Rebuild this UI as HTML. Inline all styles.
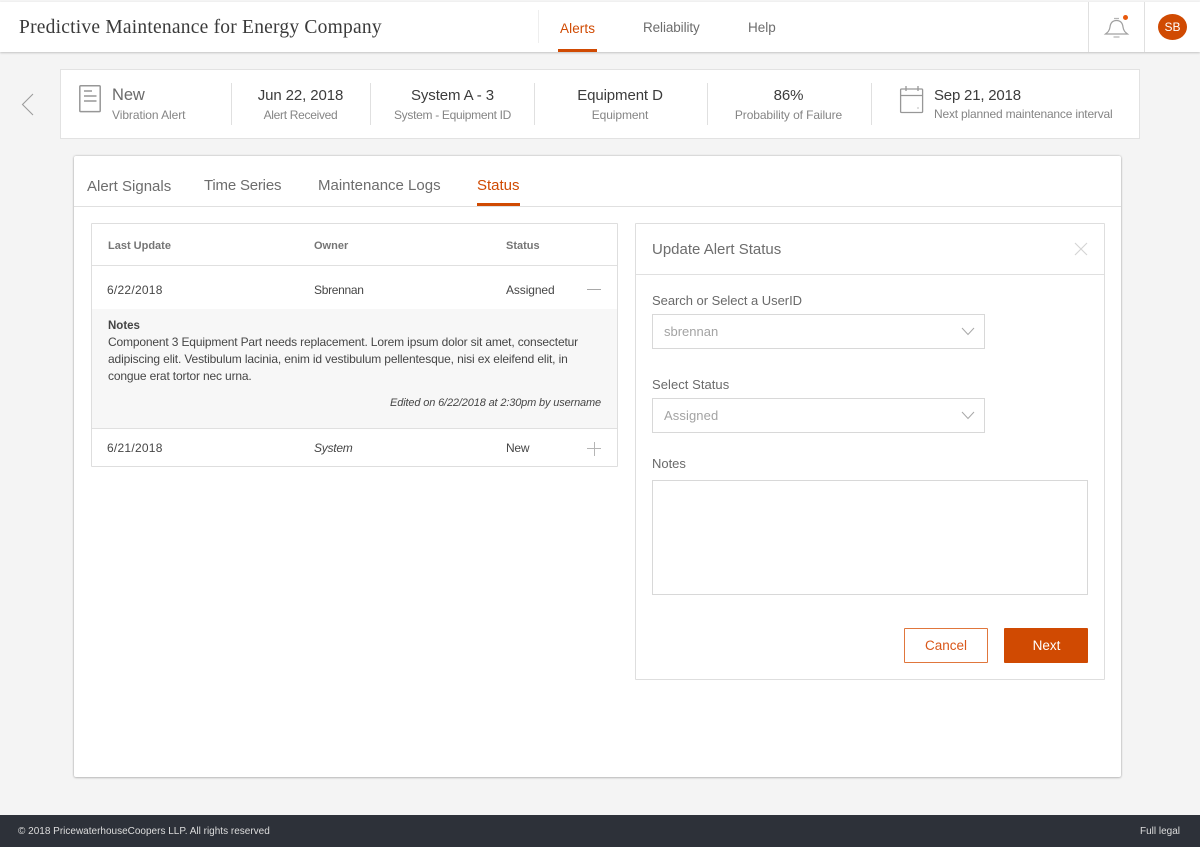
<!DOCTYPE html>
<html lang="en">
<head>
<meta charset="utf-8">
<title>Predictive Maintenance for Energy Company</title>
<style>
html,body{margin:0;padding:0;}
body{width:1200px;height:847px;position:relative;overflow:hidden;background:#f4f4f4;font-family:"Liberation Sans",Arial,sans-serif;color:#464646;}
.a{position:absolute;box-sizing:border-box;}
.t{position:absolute;white-space:nowrap;line-height:20px;height:20px;}
.c{transform:translateX(-50%);}
.r{transform:translateX(-100%);}
.line{position:absolute;background:#e0e0e0;}
svg{position:absolute;overflow:visible;}
</style>
</head>
<body>
<!-- header -->
<div class="a" style="left:0;top:2px;width:1200px;height:50px;background:#fff;box-shadow:0 1px 2px rgba(0,0,0,.2);"></div>
<div class="t" style="left:19px;top:18px;font-family:'Liberation Serif',serif;font-size:19.5px;color:#3a3a3a;letter-spacing:.22px;">Predictive Maintenance for Energy Company</div>
<div class="line" style="left:538px;top:10px;width:1px;height:33px;background:#eee;"></div>
<div class="t" style="left:560px;top:19px;font-size:13.5px;color:#d04a02;letter-spacing:.1px;">Alerts</div>
<div class="a" style="left:558px;top:49px;width:39px;height:3px;background:#d04a02;"></div>
<div class="t" style="left:643px;top:18px;font-size:13.5px;color:#6d6d6d;letter-spacing:-.1px;">Reliability</div>
<div class="t" style="left:748px;top:18px;font-size:13.5px;color:#6d6d6d;letter-spacing:0;">Help</div>
<div class="line" style="left:1088px;top:2px;width:1px;height:50px;"></div>
<div class="line" style="left:1144px;top:2px;width:1px;height:50px;"></div>
<svg style="left:1104px;top:16px;" width="26" height="24" viewBox="0 0 26 24" fill="none" stroke="#a0a0a0" stroke-width="1.200">
<path d="M1.500 18c2-1.500 4-3 4.500-7 .5-4 2.500-6.500 6.500-6.500s6 2.500 6.500 6.500c.5 4 2.500 5.500 4.500 7z"/>
<path d="M10 2.500h5M9.500 21h6" stroke="#b4b4b4"/>
</svg>
<div class="a" style="left:1123px;top:15px;width:5px;height:5px;border-radius:50%;background:#e8590c;"></div>
<div class="a" style="left:1158px;top:14px;width:29px;height:26px;border-radius:50%;background:#d04a02;"></div>
<div class="t c" style="left:1172.500px;top:17px;font-size:12px;color:#fff;">SB</div>

<!-- info card -->
<div class="a" style="left:60px;top:69px;width:1080px;height:70px;background:#fff;border:1px solid #e2e2e2;"></div>
<svg style="left:20px;top:93px;" width="15" height="23" viewBox="0 0 15 23" fill="none" stroke="#9c9c9c" stroke-width="1.100">
<path d="M13 1L2.500 11.500 13 22"/>
</svg>
<svg style="left:79px;top:85px;" width="23" height="28" viewBox="0 0 23 28" fill="none" stroke="#979797" stroke-width="1.500">
<rect x=".8" y=".8" width="20.400" height="25.800" rx="1"/>
<path d="M5 6h8M5 11h12.500M5 16h12.500"/>
</svg>
<div class="t" style="left:112px;top:85px;font-size:16.500px;color:#6a6a6a;letter-spacing:-.1px;">New</div>
<div class="t" style="left:112px;top:105px;font-size:12px;color:#858585;letter-spacing:-.07px;">Vibration Alert</div>
<div class="line" style="left:231px;top:83px;width:1px;height:42px;"></div>
<div class="t c" style="left:300.500px;top:86px;font-size:15px;color:#3c3c3c;letter-spacing:-.1px;">Jun 22, 2018</div>
<div class="t c" style="left:300.500px;top:105px;font-size:12px;color:#858585;letter-spacing:-.3px;">Alert Received</div>
<div class="line" style="left:370px;top:83px;width:1px;height:42px;"></div>
<div class="t c" style="left:452.500px;top:86px;font-size:15px;color:#3c3c3c;letter-spacing:-.1px;">System A - 3</div>
<div class="t c" style="left:452.500px;top:105px;font-size:12px;color:#858585;letter-spacing:-.3px;">System - Equipment ID</div>
<div class="line" style="left:534px;top:83px;width:1px;height:42px;"></div>
<div class="t c" style="left:620px;top:86px;font-size:15px;color:#3c3c3c;letter-spacing:-.1px;">Equipment D</div>
<div class="t c" style="left:620px;top:105px;font-size:12px;color:#858585;letter-spacing:-.1px;">Equipment</div>
<div class="line" style="left:707px;top:83px;width:1px;height:42px;"></div>
<div class="t c" style="left:788.500px;top:86px;font-size:15px;color:#3c3c3c;letter-spacing:-.1px;">86%</div>
<div class="t c" style="left:788.500px;top:105px;font-size:12px;color:#858585;letter-spacing:-.1px;">Probability of Failure</div>
<div class="line" style="left:871px;top:83px;width:1px;height:42px;"></div>
<svg style="left:899px;top:85px;" width="26" height="29" viewBox="0 0 26 29" fill="none" stroke="#979797" stroke-width="1.300">
<rect x="1.600" y="4" width="22" height="23.500" rx="1"/>
<path d="M1.600 10.500h22M7 1v5M19 1v5"/>
<path d="M18.500 23h1" stroke-width="1.300"/>
</svg>
<div class="t" style="left:934px;top:86px;font-size:15px;color:#3c3c3c;letter-spacing:-.2px;">Sep 21, 2018</div>
<div class="t" style="left:934px;top:104px;font-size:12px;color:#858585;letter-spacing:-.19px;">Next planned maintenance interval</div>

<!-- main card -->
<div class="a" style="left:74px;top:156px;width:1047px;height:621px;background:#fff;border-radius:2px;box-shadow:0 0 2px rgba(0,0,0,.28),0 1px 2px rgba(0,0,0,.14);"></div>
<div class="line" style="left:74px;top:206px;width:1047px;height:1px;"></div>
<div class="t" style="left:87px;top:177px;font-size:15px;color:#6d6d6d;letter-spacing:0;">Alert Signals</div>
<div class="t" style="left:204px;top:176px;font-size:15px;color:#6d6d6d;letter-spacing:-.2px;">Time Series</div>
<div class="t" style="left:318px;top:176px;font-size:15px;color:#6d6d6d;letter-spacing:0;">Maintenance Logs</div>
<div class="t" style="left:477px;top:176px;font-size:15px;color:#d04a02;letter-spacing:0;">Status</div>
<div class="a" style="left:477px;top:203px;width:43px;height:3px;background:#d04a02;"></div>

<!-- table -->
<div class="a" style="left:91px;top:223px;width:527px;height:244px;background:#fff;border:1px solid #dedede;border-radius:1px;"></div>
<div class="line" style="left:92px;top:265px;width:525px;height:1px;"></div>
<div class="t" style="left:108px;top:236px;font-size:11px;font-weight:bold;color:#757575;">Last Update</div>
<div class="t" style="left:314px;top:236px;font-size:11px;font-weight:bold;color:#757575;">Owner</div>
<div class="t" style="left:506px;top:236px;font-size:11px;font-weight:bold;color:#757575;">Status</div>
<div class="t" style="left:107px;top:280px;font-size:12px;color:#464646;letter-spacing:.25px;">6/22/2018</div>
<div class="t" style="left:314px;top:280px;font-size:12px;color:#464646;letter-spacing:-.3px;">Sbrennan</div>
<div class="t" style="left:506px;top:280px;font-size:12px;color:#464646;letter-spacing:-.1px;">Assigned</div>
<div class="a" style="left:587px;top:289px;width:14px;height:1px;background:#a8a8a8;"></div>
<div class="a" style="left:92px;top:309px;width:525px;height:119px;background:#f7f7f7;"></div>
<div class="line" style="left:92px;top:428px;width:525px;height:1px;"></div>
<div class="t" style="left:108px;top:316px;font-size:11.500px;font-weight:bold;color:#454545;">Notes</div>
<div class="t" style="left:108px;top:332px;font-size:12px;color:#464646;letter-spacing:-.16px;">Component 3 Equipment Part needs replacement. Lorem ipsum dolor sit amet, consectetur</div>
<div class="t" style="left:108px;top:349px;font-size:12px;color:#464646;letter-spacing:-.14px;">adipiscing elit. Vestibulum lacinia, enim id vestibulum pellentesque, nisi ex eleifend elit, in</div>
<div class="t" style="left:108px;top:366px;font-size:12px;color:#464646;letter-spacing:-.16px;">congue erat tortor nec urna.</div>
<div class="t r" style="left:601px;top:393px;font-size:11px;font-style:italic;color:#464646;letter-spacing:-.15px;">Edited on 6/22/2018 at 2:30pm by username</div>
<div class="t" style="left:107px;top:438px;font-size:12px;color:#464646;letter-spacing:.25px;">6/21/2018</div>
<div class="t" style="left:314px;top:438px;font-size:12px;font-style:italic;color:#464646;letter-spacing:-.25px;">System</div>
<div class="t" style="left:506px;top:438px;font-size:12px;color:#464646;letter-spacing:-.25px;">New</div>
<div class="a" style="left:587px;top:448px;width:14px;height:1px;background:#b5b5b5;"></div>
<div class="a" style="left:594px;top:442px;width:1px;height:14px;background:#b5b5b5;"></div>

<!-- form -->
<div class="a" style="left:635px;top:223px;width:470px;height:457px;background:#fff;border:1px solid #dedede;border-radius:1px;"></div>
<div class="line" style="left:636px;top:274px;width:468px;height:1px;"></div>
<div class="t" style="left:652px;top:240px;font-size:15px;color:#6d6d6d;letter-spacing:0;">Update Alert Status</div>
<svg style="left:1074px;top:242px;" width="14" height="14" viewBox="0 0 14 14" fill="none" stroke="#d4d4d4" stroke-width="1.100"><path d="M1 1l12 12M13 1L1 13"/></svg>
<div class="t" style="left:652px;top:291px;font-size:13px;color:#6a6a6a;letter-spacing:-.04px;">Search or Select a UserID</div>
<div class="a" style="left:652px;top:314px;width:333px;height:35px;border:1px solid #d8d8d8;"></div>
<div class="t" style="left:664px;top:322px;font-size:13px;color:#a3a3a3;">sbrennan</div>
<svg style="left:961px;top:327px;" width="14" height="9" viewBox="0 0 14 9" fill="none" stroke="#a8a8a8" stroke-width="1"><path d="M1 1l6 6.500L13 1"/></svg>
<div class="t" style="left:652px;top:375px;font-size:13px;color:#6a6a6a;letter-spacing:.05px;">Select Status</div>
<div class="a" style="left:652px;top:398px;width:333px;height:35px;border:1px solid #d8d8d8;"></div>
<div class="t" style="left:664px;top:406px;font-size:13px;color:#a3a3a3;letter-spacing:.1px;">Assigned</div>
<svg style="left:961px;top:411px;" width="14" height="9" viewBox="0 0 14 9" fill="none" stroke="#a8a8a8" stroke-width="1"><path d="M1 1l6 6.500L13 1"/></svg>
<div class="t" style="left:652px;top:454px;font-size:13px;color:#6a6a6a;letter-spacing:-.02px;">Notes</div>
<div class="a" style="left:652px;top:480px;width:436px;height:115px;border:1px solid #d8d8d8;"></div>
<div class="a" style="left:904px;top:628px;width:84px;height:35px;border:1px solid #e0763c;border-radius:1px;background:#fff;"></div>
<div class="t c" style="left:946px;top:636px;font-size:13.500px;color:#d9571a;">Cancel</div>
<div class="a" style="left:1004px;top:628px;width:84px;height:35px;background:#d04a02;border-radius:1px;"></div>
<div class="t c" style="left:1046.500px;top:636px;font-size:13.500px;color:#fff;">Next</div>

<!-- footer -->
<div class="a" style="left:0;top:815px;width:1200px;height:32px;background:#2d3139;"></div>
<div class="t" style="left:18px;top:822px;font-size:10px;color:#dcdcdc;">© 2018 PricewaterhouseCoopers LLP. All rights reserved</div>
<div class="t r" style="left:1180px;top:822px;font-size:10px;color:#dcdcdc;">Full legal</div>
</body>
</html>
